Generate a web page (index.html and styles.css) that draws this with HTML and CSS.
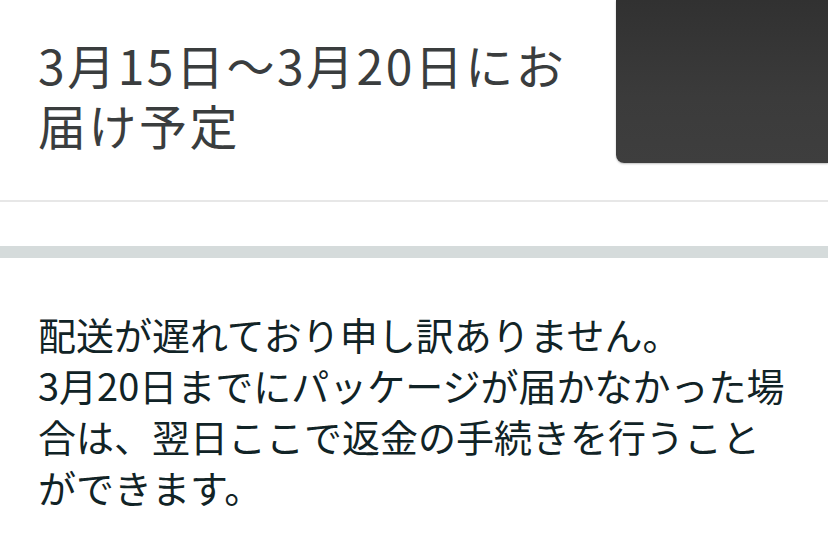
FILE: index.html
```html
<!DOCTYPE html>
<html lang="ja">
<head>
<meta charset="utf-8">
<link rel="stylesheet" href="styles.css">
</head>
<body>
<header class="delivery">
  <h1 class="delivery-title">3月15日〜3月20日にお届け予定</h1>
  <div class="product-thumb"></div>
</header>
<div class="divider"></div>
<div class="section-gap"></div>
<main class="notice">
  <p class="notice-text">配送が遅れており申し訳ありません。<br>3月20日までにパッケージが届かなかった場合は、翌日ここで返金の手続きを行うことができます。</p>
</main>
</body>
</html>
```

FILE: styles.css
```css
html, body {
  margin: 0;
  padding: 0;
  background: #ffffff;
}
body {
  font-family: "Noto Sans CJK JP", "Noto Sans", sans-serif;
  width: 828px;
  height: 558px;
  overflow: hidden;
}
.delivery {
  display: flex;
  justify-content: space-between;
  align-items: flex-start;
  height: 200px;
}
.delivery-title {
  margin: 0;
  padding: 34px 0 0 38px;
  width: 560px;
  font-size: 48px;
  line-height: 60px;
  letter-spacing: 2.5px;
  font-weight: 400;
  color: #3a3d3e;
}
.product-thumb {
  width: 212px;
  height: 163px;
  border-bottom-left-radius: 8px;
  background: linear-gradient(180deg, #313131 0%, #3b3b3b 60%, #3e3e3e 100%);
  box-shadow: 0 1px 2px rgba(0,0,0,0.25);
}
.divider {
  height: 2px;
  background: #e7e7e7;
}
.section-gap {
  height: 44px;
  border-bottom: 12px solid #d5dbdb;
}
.notice {
  padding: 50px 38px 0 38px;
}
.notice-text {
  margin: 0;
  font-size: 38px;
  line-height: 51px;
  color: #112326;
}
```
